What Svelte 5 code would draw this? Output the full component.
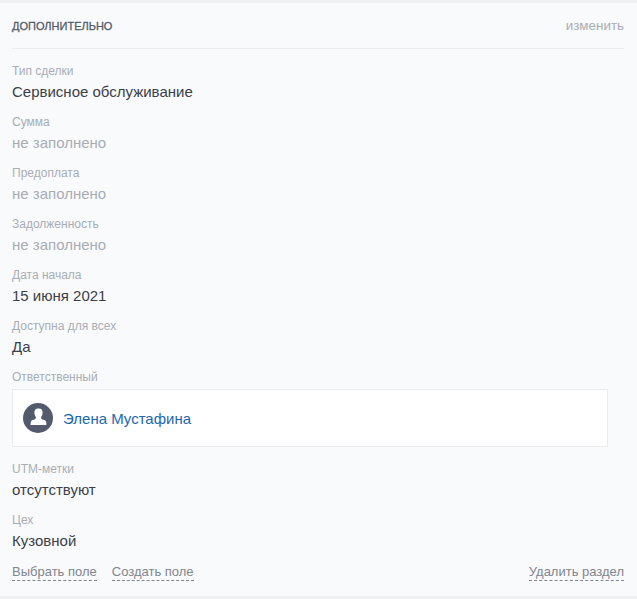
<script>
  const before = [
    { label: "Тип сделки", value: "Сервисное обслуживание" },
    { label: "Сумма", value: "не заполнено", empty: true },
    { label: "Предоплата", value: "не заполнено", empty: true },
    { label: "Задолженность", value: "не заполнено", empty: true },
    { label: "Дата начала", value: "15 июня 2021" },
    { label: "Доступна для всех", value: "Да" }
  ];
  const after = [
    { label: "UTM-метки", value: "отсутствуют" },
    { label: "Цех", value: "Кузовной" }
  ];
</script>

<section class="panel">
  <header class="head">
    <h2>Дополнительно</h2>
    <span class="edit">изменить</span>
  </header>

  {#each before as f}
    <div class="field">
      <div class="label">{f.label}</div>
      <div class="value" class:empty={f.empty}>{f.value}</div>
    </div>
  {/each}

  <div class="field owner">
    <div class="label">Ответственный</div>
    <div class="card">
      <svg class="avatar" viewBox="0 0 30 30" aria-hidden="true">
        <circle cx="15" cy="15" r="15" fill="#525a6c" />
        <path
          d="M15 5.500c-2.300 0-3.600 1.600-3.600 4 0 1.800.5 3.300 1.400 4.300v1.400c0 .5-.3.8-.8 1-1.500.6-3.300 1-3.800 1.700-.4.600-.6 2.300-.6 4.100h15.800c0-1.800-.2-3.500-.6-4.100-.5-.7-2.300-1.100-3.800-1.700-.5-.2-.8-.5-.8-1v-1.400c.9-1 1.400-2.500 1.400-4.300 0-2.400-1.300-4-3.600-4z"
          fill="#fff"
        />
      </svg>
      <span class="name">Элена Мустафина</span>
    </div>
  </div>

  {#each after as f}
    <div class="field">
      <div class="label">{f.label}</div>
      <div class="value">{f.value}</div>
    </div>
  {/each}

  <footer class="actions">
    <span class="dashed">Выбрать поле</span>
    <span class="dashed">Создать поле</span>
    <span class="dashed right">Удалить раздел</span>
  </footer>
</section>

<style>
  :global(body) {
    margin: 0;
    background: #eff0f2;
  }

  .panel {
    box-sizing: border-box;
    height: 593px;
    margin-top: 3px;
    padding: 0 13px 0 12px;
    background: #f9fafc;
    font-family: "Liberation Sans", Arial, sans-serif;
    overflow: hidden;
  }

  .head {
    display: flex;
    justify-content: space-between;
    align-items: center;
    height: 45px;
    border-bottom: 1px solid #e9ebee;
  }

  h2 {
    margin: 0;
    font-size: 11px;
    font-weight: 400;
    text-transform: uppercase;
    color: #535c69;
    -webkit-text-stroke: 0.3px #535c69;
  }

  .edit {
    font-size: 13.4px;
    color: #a8adb4;
  }

  .field {
    height: 51px;
    padding-top: 14px;
    box-sizing: border-box;
  }

  .label {
    font-size: 12px;
    line-height: 16px;
    color: #a8aeb5;
  }

  .value {
    margin-top: 3px;
    font-size: 15px;
    line-height: 20px;
    color: #3b4048;
  }

  .value.empty {
    color: #a8adb4;
  }

  .owner {
    height: auto;
  }

  .card {
    display: flex;
    align-items: center;
    gap: 10px;
    box-sizing: border-box;
    width: 596px;
    height: 58px;
    margin-top: 4px;
    padding-left: 10px;
    background: #fff;
    border: 1px solid #e9ebee;
  }

  .avatar {
    width: 30px;
    height: 30px;
  }

  .name {
    font-size: 15px;
    color: #2067b0;
  }

  .actions {
    display: flex;
    gap: 15px;
    margin-top: 15px;
    font-size: 13px;
    line-height: 16px;
    color: #80868e;
  }

  .dashed {
    border-bottom: 1px dashed #80868e;
  }

  .right {
    margin-left: auto;
  }
</style>
